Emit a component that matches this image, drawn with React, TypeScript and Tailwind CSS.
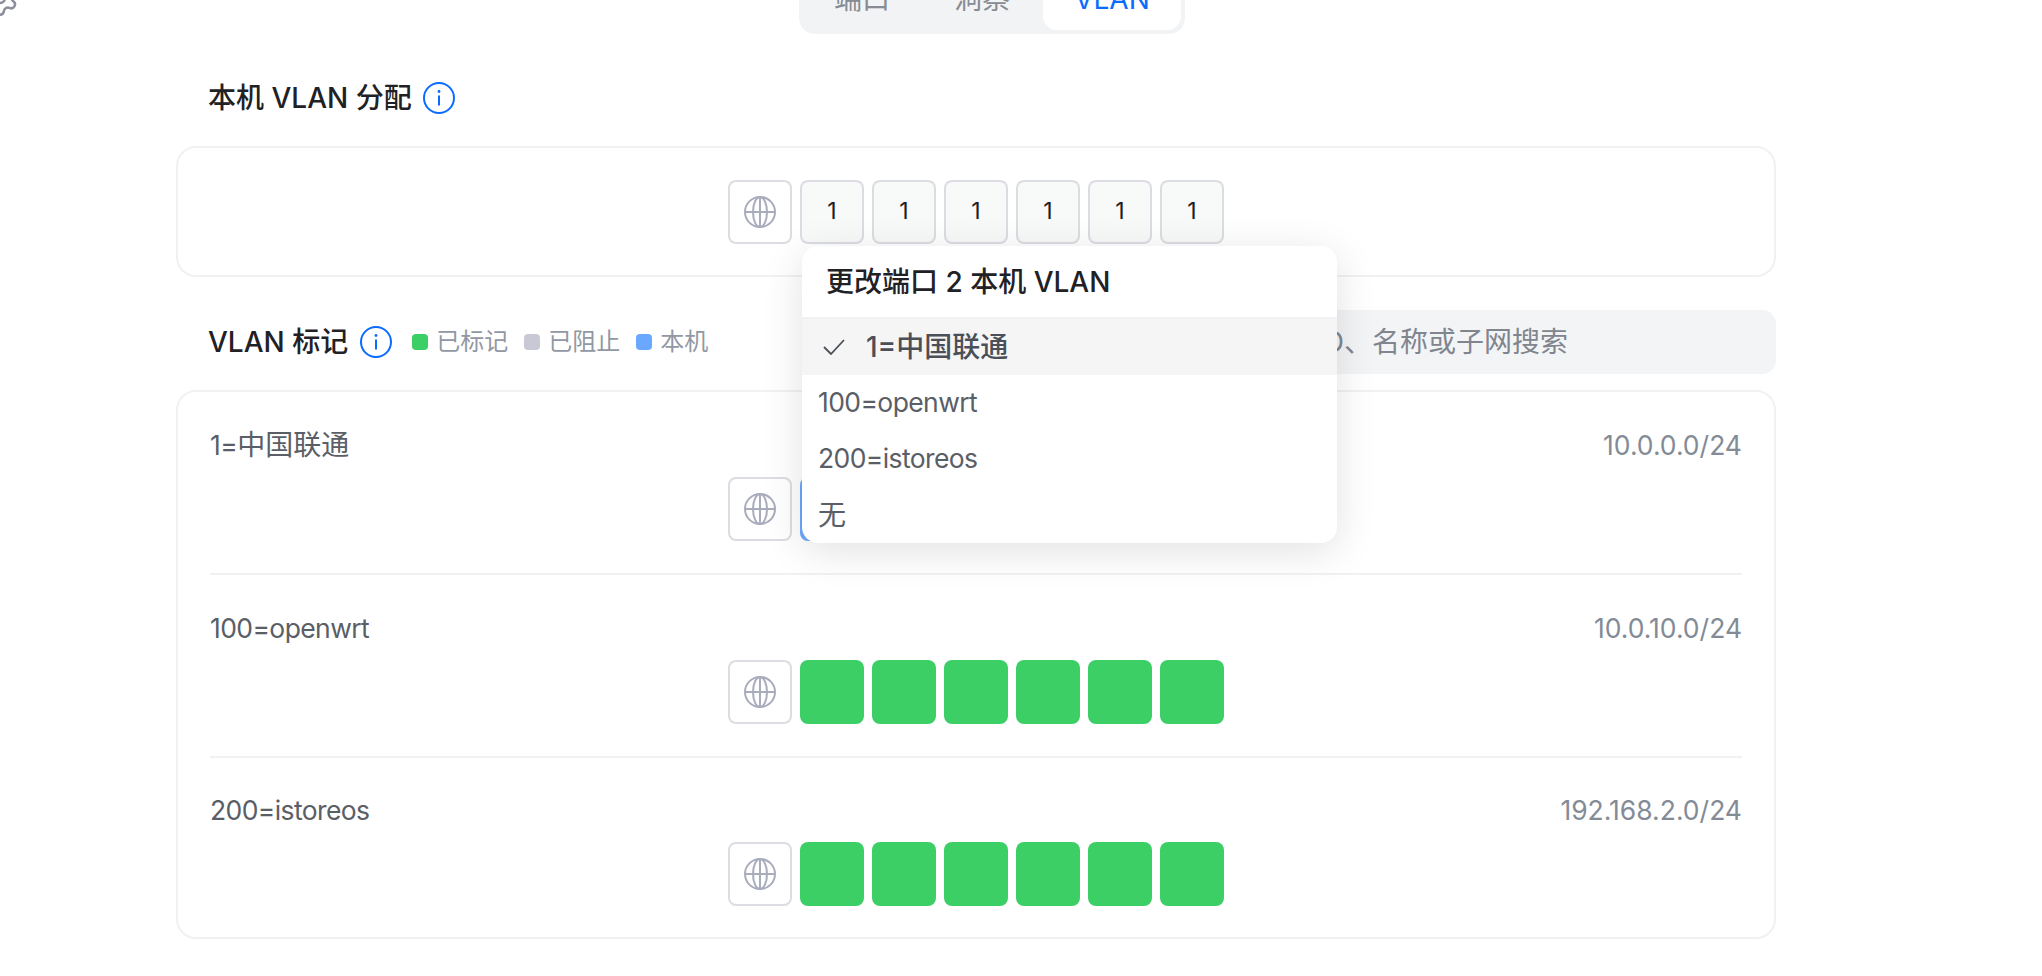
import React from "react";
import { Settings } from "lucide-react";

function Globe() {
  return (
    <svg width="32" height="32" viewBox="0 0 32 32" fill="none" stroke="#a9acbc" strokeWidth="2">
      <circle cx="16" cy="16" r="15" />
      <ellipse cx="16" cy="16" rx="7" ry="15" />
      <path d="M16 1v30M1 16h30" />
    </svg>
  );
}

function Info() {
  return (
    <svg width="32" height="32" viewBox="0 0 32 32" fill="none" className="shrink-0">
      <circle cx="16" cy="16" r="15" stroke="#0a6cff" strokeWidth="2" />
      <circle cx="16" cy="9.5" r="1.4" fill="#0a6cff" />
      <path d="M16 13.5v10" stroke="#0a6cff" strokeWidth="2" />
    </svg>
  );
}

function GlobePort() {
  return (
    <div className="flex h-16 w-16 items-center justify-center rounded-lg border-2 border-[#dcdce3] bg-white">
      <Globe />
    </div>
  );
}

function NativePort() {
  return (
    <div className="flex h-16 w-16 items-center justify-center rounded-lg border-2 border-[#dcdce3] bg-[#f8fafa] text-[23px] text-[#1f2125]">
      1
    </div>
  );
}

function Legend({ color, label }: { color: "green" | "gray" | "blue"; label: string }) {
  const dot = color === "green" ? "bg-[#3ccf65]" : color === "gray" ? "bg-[#c9c9d6]" : "bg-[#6aa8ff]";
  return (
    <div className="flex items-center gap-2">
      <span className={`h-4 w-4 rounded-[4px] ${dot}`} />
      <span className="text-[24px] leading-8 text-[#9198a3]">{label}</span>
    </div>
  );
}

function Row({
  name,
  cidr,
  first,
  blue,
  pt,
  pb,
}: {
  name: React.ReactNode;
  cidr: string;
  first?: boolean;
  blue?: boolean;
  pt: string;
  pb: string;
}) {
  return (
    <div className={`flex flex-col gap-3 ${first ? "" : "border-t-2 border-[#f1f1f3]"} ${pt} ${pb}`}>
      <div className="flex h-10 items-center justify-between text-[26.5px] leading-10">
        <span className="tracking-[-0.6px] text-[#5a5e66]">{name}</span>
        <span className="text-[26.5px] text-[#838b96]">{cidr}</span>
      </div>
      <div className="flex justify-center gap-2">
        <GlobePort />
        {[0, 1, 2, 3, 4, 5].map((i) => (
          <div
            key={i}
            className={`h-16 w-16 rounded-lg ${blue && i === 0 ? "bg-[#6aa8ff]" : "bg-[#3ccf65]"}`}
          />
        ))}
      </div>
    </div>
  );
}

export default function App() {
  return (
    <div
      className="relative h-[976px] overflow-hidden bg-white"
      style={{ fontFamily: '"Inter", "Noto Sans CJK SC", sans-serif' }}
    >
      <Settings size={40} strokeWidth={1.5} className="absolute -left-5 -top-[22px] text-[#8a8f9a]" />

      <div className="ml-[176px] w-[1600px] -mt-[36px]">
        <div className="ml-[623px] flex h-[70px] w-[386px] justify-between rounded-[16px] bg-[#f2f3f5] p-1 text-[28px] text-[#868b94]">
          <div className="flex w-[118px] items-center justify-center">端口</div>
          <div className="flex w-[119px] items-center justify-center">洞察</div>
          <div className="flex w-[138px] items-center justify-center rounded-[14px] bg-white text-[#0a6cff]">VLAN</div>
        </div>

        <div className="mb-8 mt-12 flex h-8 items-center gap-[11px] pl-8">
          <span className="text-[28px] font-medium text-[#1f2125]">本机 VLAN 分配</span>
          <Info />
        </div>

        <div className="relative flex h-[131px] items-center justify-center gap-2 rounded-[20px] border-2 border-[#f1f1f3] bg-white">
          <GlobePort />
          {[0, 1, 2, 3, 4, 5].map((i) => (
            <NativePort key={i} />
          ))}

          <div className="absolute left-[624px] top-[98px] z-10 w-[535px] overflow-hidden rounded-[16px] bg-white shadow-[0_8px_40px_rgba(0,0,0,0.12)]">
            <div className="flex h-[73px] items-center border-b-2 border-[#f1f1f3] pl-6 text-[28px] font-medium text-[#1f2125]">
              更改端口 2 本机 VLAN
            </div>
            <div className="flex h-14 items-center bg-[#f5f5f6] text-[28px] font-medium text-[#4b4f57]">
              <svg width="22" height="16" viewBox="0 0 22 16" fill="none" stroke="#4b4f57" strokeWidth="1.8" className="ml-[21px] mr-[21px]">
                <path d="M1 8l7 7L21 1" />
              </svg>
              1=中国联通
            </div>
            <div className="flex h-14 items-center pl-4 text-[26.5px] tracking-[-0.6px] text-[#5a5e66]">100=openwrt</div>
            <div className="flex h-14 items-center pl-4 text-[26.5px] tracking-[-0.6px] text-[#5a5e66]">200=istoreos</div>
            <div className="flex h-14 items-center pl-4 text-[28px] text-[#5a5e66]">无</div>
          </div>
        </div>

        <div className="mb-4 mt-[33px] flex h-16 items-center justify-between pl-8">
          <div className="flex items-center">
            <span className="text-[28px] font-medium text-[#1f2125]">VLAN 标记</span>
            <span className="ml-3 mr-5">
              <Info />
            </span>
            <div className="flex items-center gap-4">
              <Legend color="green" label="已标记" />
              <Legend color="gray" label="已阻止" />
              <Legend color="blue" label="本机" />
            </div>
          </div>
          <div className="flex h-16 w-[600px] items-center rounded-[14px] bg-[#f3f4f6] pl-[21px] text-[28px] text-[#80858e]">
            按 VLAN ID、名称或子网搜索
          </div>
        </div>

        <div className="rounded-[20px] border-2 border-[#f1f1f3] bg-white px-8">
          <Row name={<><span>1=</span><span className="text-[28px] tracking-normal">中国联通</span></>} cidr="10.0.0.0/24" first blue pt="pt-[33px]" pb="pb-8" />
          <Row name="100=openwrt" cidr="10.0.10.0/24" pt="pt-[33px]" pb="pb-8" />
          <Row name="200=istoreos" cidr="192.168.2.0/24" pt="pt-8" pb="pb-[31px]" />
        </div>
      </div>
    </div>
  );
}
